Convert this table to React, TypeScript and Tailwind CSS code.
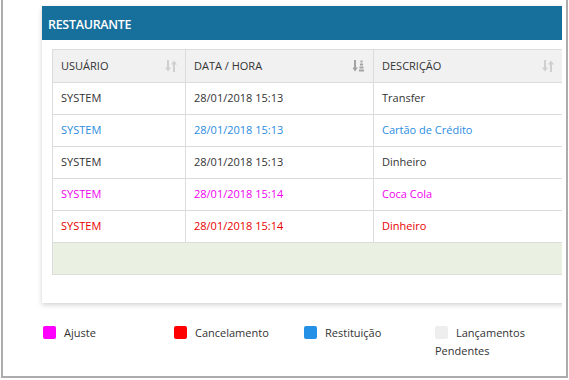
import React from "react";

type Row = { user: string; date: string; desc: string; color: string };

const rows: Row[] = [
  { user: "SYSTEM", date: "28/01/2018 15:13", desc: "Transfer", color: "text-[#333333]" },
  { user: "SYSTEM", date: "28/01/2018 15:13", desc: "Cartão de Crédito", color: "text-[#2b8ce0]" },
  { user: "SYSTEM", date: "28/01/2018 15:13", desc: "Dinheiro", color: "text-[#333333]" },
  { user: "SYSTEM", date: "28/01/2018 15:14", desc: "Coca Cola", color: "text-[#f000f0]" },
  { user: "SYSTEM", date: "28/01/2018 15:14", desc: "Dinheiro", color: "text-[#e80000]" },
];

const legend = [
  { label: "Ajuste", swatch: "bg-[#ff00ff]" },
  { label: "Cancelamento", swatch: "bg-[#ff0000]" },
  { label: "Restituição", swatch: "bg-[#2591e6]" },
  { label: "Lançamentos Pendentes", swatch: "bg-[#eeeeee]" },
];

// sort both ways
const SortIcon = () => (
  <svg width="12" height="12" viewBox="0 0 12 12" className="shrink-0">
    <g fill="#cfcfcf">
      <rect x="2" y="0" width="2" height="8" />
      <polygon points="0,7.5 6,7.5 3,11.5" />
      <rect x="8" y="4" width="2" height="8" />
      <polygon points="6,4.5 12,4.5 9,0.5" />
    </g>
  </svg>
);

// sorted column
const SortedIcon = () => (
  <svg width="12" height="12" viewBox="0 0 12 12" className="shrink-0">
    <g fill="#a3a3a3">
      <rect x="1" y="0" width="2" height="8" />
      <polygon points="-1,7.5 5,7.5 2,11.5" />
      <rect x="7.5" y="0.5" width="2" height="2" />
      <rect x="7" y="3.5" width="3" height="2" />
      <rect x="6.5" y="6.5" width="4" height="2" />
      <rect x="6" y="9.5" width="5" height="2" />
    </g>
  </svg>
);

const HeadCell = ({ title, sorted }: { title: string; sorted?: boolean }) => (
  <th className="border border-[#dcdcdc] bg-[#f1f1f1] h-[33px] px-2 text-left font-normal">
    <div className="flex items-center justify-between">
      <span>{title}</span>
      {sorted ? <SortedIcon /> : <SortIcon />}
    </div>
  </th>
);

export default function App() {
  return (
    <div className="w-[569px] h-[380px] bg-white font-['Open_Sans',sans-serif] text-[11px] text-[#333333]">
      <div className="ml-px w-[567px] h-[378px] border-x-2 border-b-2 border-[#acacac]">
        <div className="w-[559px] h-[376px] overflow-hidden pl-[39px] pt-[6px]">
          <div className="w-[530px] bg-white shadow-[0_2px_5px_rgba(0,0,0,0.18)]">
            <div className="h-[34px] bg-[#17709c] px-[6px] pt-[4px] flex items-center">
              <span className="text-white font-semibold text-[12.5px] tracking-[-0.3px]">RESTAURANTE</span>
            </div>
            <div className="px-[10px] pt-[9px] pb-[28px]">
              <table className="w-[510px] table-fixed border-collapse">
                <colgroup>
                  <col className="w-[133px]" />
                  <col className="w-[188px]" />
                  <col className="w-[189px]" />
                </colgroup>
                <thead>
                  <tr>
                    <HeadCell title="USUÁRIO" />
                    <HeadCell title="DATA / HORA" sorted />
                    <HeadCell title="DESCRIÇÃO" />
                  </tr>
                </thead>
                <tbody>
                  {rows.map((r, i) => (
                    <tr key={i} className={r.color}>
                      <td className="border border-[#dcdcdc] h-[32px] px-2">{r.user}</td>
                      <td className="border border-[#dcdcdc] h-[32px] px-2">{r.date}</td>
                      <td className="border border-[#dcdcdc] h-[32px] px-2">{r.desc}</td>
                    </tr>
                  ))}
                  <tr>
                    <td colSpan={3} className="border border-[#dcdcdc] bg-[#ebf1e2] h-[32px]"></td>
                  </tr>
                </tbody>
              </table>
            </div>
          </div>

          <div className="mt-[21px] ml-[1px] grid grid-cols-[131px_130px_131px_131px] leading-[18px]">
            {legend.map((l) => (
              <div key={l.label}>
                <span className={`inline-block w-[13px] h-[13px] rounded-[2px] align-[-2px] mr-[8px] ${l.swatch}`}></span>
                {l.label}
              </div>
            ))}
          </div>
        </div>
      </div>
    </div>
  );
}
